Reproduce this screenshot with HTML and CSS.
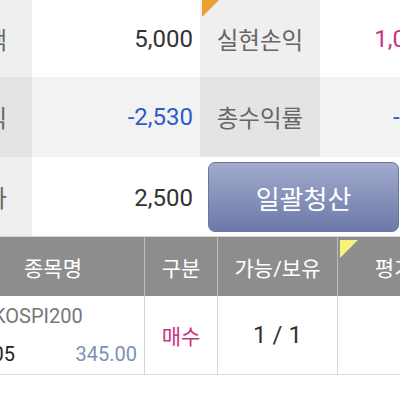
FILE: index.html
```html
<!DOCTYPE html>
<html lang="ko">
<head>
<meta charset="utf-8">
<link rel="stylesheet" href="styles.css">
</head>
<body>
<div class="screen">
  <div class="summary">
    <div class="lbl lbl-left r1">매입금액</div>
    <div class="val r1">5,000</div>
    <div class="lbl r1 mark-cell"><span class="mark-orange"></span>실현손익</div>
    <div class="val pink r1">1,000</div>

    <div class="lbl lbl-left r2">평가손익</div>
    <div class="val blue r2">-2,530</div>
    <div class="lbl r2">총수익률</div>
    <div class="val blue r2">-1.0</div>

    <div class="lbl lbl-left r3">평가</div>
    <div class="val r3">2,500</div>
    <div class="btn-cell r3"><button class="btn">일괄청산</button></div>
  </div>

  <div class="table">
    <div class="th c1">종목명</div>
    <div class="th c2">구분</div>
    <div class="th c3">가능/보유</div>
    <div class="th c4"><span class="mark-yellow"></span>평가손익</div>

    <div class="td c1 name">
      <div class="name-top">KOSPI200</div>
      <div class="name-bot"><span class="code">2505</span><span class="price">345.00</span></div>
    </div>
    <div class="td c2 pink side">매수</div>
    <div class="td c3 qty">1 / 1</div>
    <div class="td c4"></div>
  </div>
</div>
</body>
</html>
```

FILE: styles.css
```css
html, body {
  margin: 0;
  padding: 0;
  background: #fff;
  overflow: hidden;
}
body {
  width: 400px;
  height: 400px;
  font-family: Roboto, "Noto Sans CJK KR", sans-serif;
}
.screen {
  width: 600px;
  margin-left: -88px;
}
.summary {
  display: grid;
  grid-template-columns: 120px 168px 120px 120px;
  grid-template-rows: 77px 80px 80px;
}
.lbl {
  display: flex;
  align-items: center;
  justify-content: center;
  font-size: 23.5px;
  color: #666;
  background: #efefef;
  position: relative;
}
.lbl-left {
  justify-content: flex-end;
  padding-right: 25px;
  overflow: hidden;
  white-space: nowrap;
}
.lbl.r2 { background: #e4e4e4; }
.val {
  display: flex;
  align-items: center;
  justify-content: flex-end;
  padding-right: 7px;
  font-size: 24px;
  color: #333;
  background: #fff;
}
.val.r1 { padding-top: 0; }
.val.r3 { padding-top: 3px; }
.val.r2 { background: #f2f2f2; }
.r3 { border-bottom: 1px solid #d6d6d6; }
.blue { color: #2c5cc9; }
.pink { color: #c9357a; }
.mark-orange {
  position: absolute;
  left: 2px;
  top: 0;
  width: 0;
  height: 0;
  border-top: 17px solid #e9a12f;
  border-right: 17px solid transparent;
}
.btn-cell {
  grid-column: 3 / span 2;
  background: #fff;
  padding: 5px 0 4px 8px;
}
.btn {
  width: 191px;
  height: 100%;
  border: 1px solid #6a75a0;
  border-radius: 7px;
  background: linear-gradient(#a1aacd, #6d79a7);
  color: #fff;
  font-family: "Noto Sans CJK KR", sans-serif;
  font-size: 26px;
  padding: 0;
}
.table {
  margin-left: 50px;
  display: grid;
  grid-template-columns: 183px 73px 120px 152px;
  grid-template-rows: 59px 79px;
}
.th {
  background: #8d8d8d;
  color: #fff;
  font-size: 21px;
  display: flex;
  align-items: center;
  justify-content: center;
  border-right: 1px solid #bdbdbd;
  position: relative;
}
.mark-yellow {
  position: absolute;
  left: 2px;
  top: 3px;
  width: 0;
  height: 0;
  border-top: 18px solid #f6f27c;
  border-right: 18px solid transparent;
}
.td {
  border-right: 1px solid #d4d4d4;
  border-bottom: 1px solid #dcdcdc;
  display: flex;
  align-items: center;
  justify-content: center;
  font-size: 20px;
}
.side { font-size: 21px; }
.name {
  flex-direction: column;
  align-items: stretch;
  justify-content: center;
  gap: 14px;
  padding-right: 7px;
}
.name-top {
  padding-left: 31px;
  color: #777;
  font-size: 20px;
  line-height: 24px;
}
.name-bot {
  display: flex;
  justify-content: space-between;
  padding-left: 8px;
  line-height: 24px;
}
.code { color: #222; }
.price { color: #7d90b6; }
.qty {
  font-size: 24px;
  color: #333;
}
```
